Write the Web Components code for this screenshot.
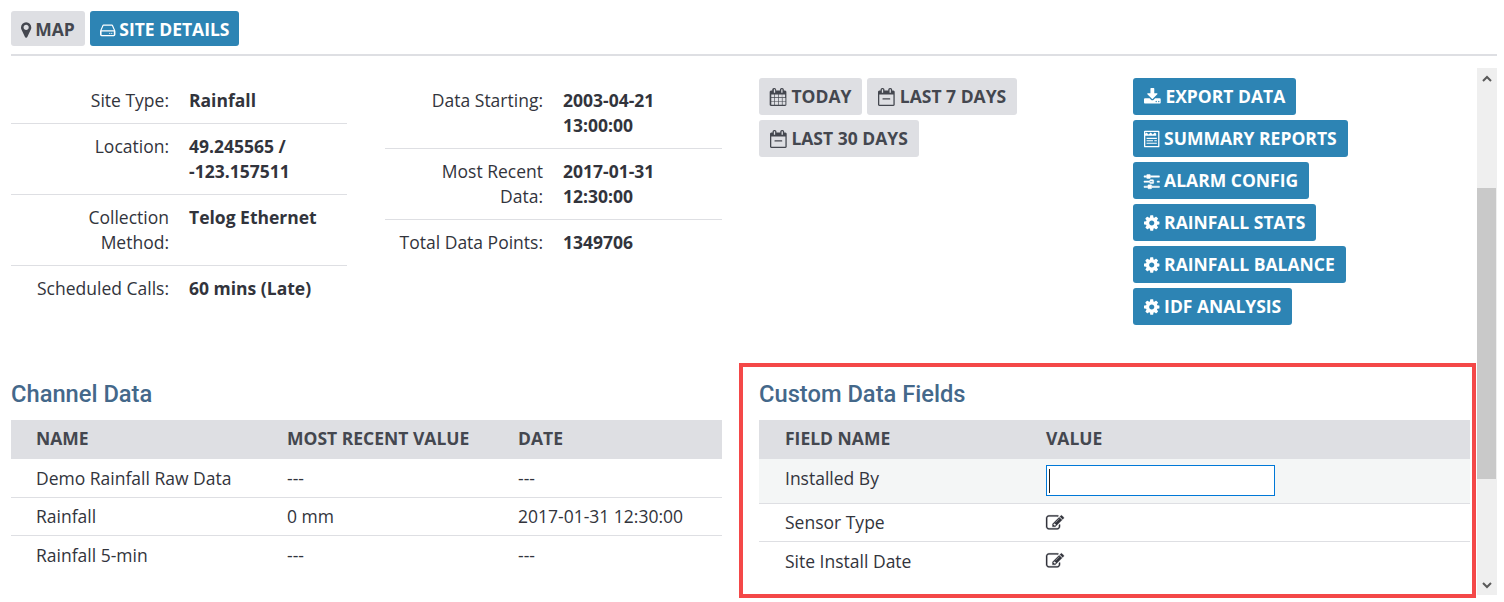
<!DOCTYPE html>
<html>
<head>
<meta charset="utf-8">
<title>Site Details</title>
<style>
  html, body { margin: 0; padding: 0; height: 100%; overflow: hidden; background: white; }
  body { color: #32343c; font-family: "Open Sans", sans-serif; font-size: 17.5px; line-height: 25px; }
</style>
</head>
<body>
<site-page></site-page>

<script>
// x and w crop the 1792 grid to the width each glyph takes up in its line of text
const ICONS = {
  marker: { x: 384, w: 1024, d: "M1152 640q0 106-75 181t-181 75-181-75-75-181 75-181 181-75 181 75 75 181zm256 0q0-212-150-362t-362-150-362 150-150 362q0 109 33 179l365 774q16 33 47.5 52t67.5 19 67.5-19 46.5-52l364-774q33-70 33-179z" },
  hdd: { x: 128, w: 1536, d: "M470 352h852q60 0 88 56l234 536q20 44 20 92v320q0 66-47 113t-113 47H288q-66 0-113-47t-47-113v-320q0-48 20-92l234-536q28-56 88-56zM480 480H1312L1516 928H276zM288 1056H1504V1360Q1504 1392 1472 1392H320Q288 1392 288 1360zM1160 1230a60 60 0 1 1-120 0a60 60 0 1 1 120 0zM1360 1230a60 60 0 1 1-120 0a60 60 0 1 1 120 0z" },
  calendar: { x: 64, w: 1664, d: "M192 1664h288v-288h-288v288zm352 0h320v-288h-320v288zm-352-352h288v-320h-288v320zm352 0h320v-320h-320v320zm-352-384h288v-288h-288v288zm736 736h320v-288h-320v288zm-384-736h320v-288h-320v288zm768 736h288v-288h-288v288zm-384-352h320v-320h-320v320zm-352-864v-288q0-13-9.5-22.5t-22.5-9.5h-64q-13 0-22.5 9.5t-9.5 22.5v288q0 13 9.5 22.5t22.5 9.5h64q13 0 22.5-9.5t9.5-22.5zm736 864h288v-320h-288v320zm-384-384h320v-288h-320v288zm352 0h288v-288h-288v288zm32-480v-288q0-13-9.5-22.5t-22.5-9.5h-64q-13 0-22.5 9.5t-9.5 22.5v288q0 13 9.5 22.5t22.5 9.5h64q13 0 22.5-9.5t9.5-22.5zm384-64v1280q0 52-38 90t-90 38h-1408q-52 0-90-38t-38-90v-1280q0-52 38-90t90-38h128v-96q0-66 47-113t113-47h64q66 0 113 47t47 113v96h384v-96q0-66 47-113t113-47h64q66 0 113 47t47 113v96h128q52 0 90 38t38 90z" },
  calminus: { x: 64, w: 1664, d: "M1280 1056v64q0 14-9 23t-23 9h-704q-14 0-23-9t-9-23v-64q0-14 9-23t23-9h704q14 0 23 9t9 23zm-1088 608h1408v-1024h-1408v1024zm384-1216v-288q0-14-9-23t-23-9h-64q-14 0-23 9t-9 23v288q0 14 9 23t23 9h64q14 0 23-9t9-23zm768 0v-288q0-14-9-23t-23-9h-64q-14 0-23 9t-9 23v288q0 14 9 23t23 9h64q14 0 23-9t9-23zm384-64v1280q0 52-38 90t-90 38h-1408q-52 0-90-38t-38-90v-1280q0-52 38-90t90-38h128v-96q0-66 47-113t113-47h64q66 0 113 47t47 113v96h384v-96q0-66 47-113t113-47h64q66 0 113 47t47 113v96h128q52 0 90 38t38 90z" },
  download: { x: 64, w: 1664, d: "M1344 1344q0-26-19-45t-45-19-45 19-19 45 19 45 45 19 45-19 19-45zm256 0q0-26-19-45t-45-19-45 19-19 45 19 45 45 19 45-19 19-45zm128-224v320q0 40-28 68t-68 28h-1472q-40 0-68-28t-28-68v-320q0-40 28-68t68-28h465l135 136q58 56 136 56t136-56l136-136h464q40 0 68 28t28 68zm-325-569q17 41-14 70l-448 448q-18 19-45 19t-45-19l-448-448q-31-29-14-70 17-39 59-39h256v-448q0-26 19-45t45-19h256q26 0 45 19t19 45v448h256q42 0 59 39z" },
  report: { x: 128, w: 1536, d: "M224 64h1344q96 0 96 96v1472q0 96-96 96H224q-96 0-96-96V160q0-96 96-96zM256 192v1408h1280V192zM384 256l192 192 224-192 192 192 224-192 128 128v192H256V384zM384 768h1024v128H384zM384 1024h640v96H384zM1152 1024h256v96h-256zM384 1280h1024v96H384z" },
  sliders: { x: 128, w: 1536, s: 50, d: "M480 1408v128h-352v-128h352zm352-128q26 0 45 19t19 45v256q0 26-19 45t-45 19h-256q-26 0-45-19t-19-45v-256q0-26 19-45t45-19h256zm160-384v128h-864v-128h864zm-640-512v128h-224v-128h224zm1312 1024v128h-736v-128h736zm-960-1152q26 0 45 19t19 45v256q0 26-19 45t-45 19h-256q-26 0-45-19t-19-45v-256q0-26 19-45t45-19h256zm320 512q26 0 45 19t19 45v256q0 26-19 45t-45 19h-256q-26 0-45-19t-19-45v-256q0-26 19-45t45-19h256zm640 128v128h-224v-128h224zm0-512v128h-864v-128h864z" },
  gear: { x: 128, w: 1536, d: "M1152 896q0-106-75-181t-181-75-181 75-75 181 75 181 181 75 181-75 75-181zm512-109v222q0 12-8 23t-20 13l-185 28q-19 54-39 91 35 50 107 138 10 12 10 25t-9 23q-27 37-99 108t-94 71q-12 0-26-9l-138-108q-44 23-91 38-16 136-29 186-7 28-36 28h-222q-14 0-24.5-8.5t-11.5-21.5l-28-184q-49-16-90-37l-141 107q-10 9-25 9-14 0-25-11-126-114-165-168-7-10-7-23 0-12 8-23 15-21 51-66.5t54-70.5q-27-50-41-99l-183-27q-13-2-21-12.5t-8-23.5v-222q0-12 8-23t19-13l186-28q14-46 39-92-40-57-107-138-10-12-10-24 0-10 9-23 26-36 98.5-107.5t94.5-71.5q13 0 26 10l138 107q44-23 91-38 16-136 29-186 7-28 36-28h222q14 0 24.5 8.5t11.5 21.5l28 184q49 16 90 37l142-107q9-9 24-9 13 0 25 10 129 119 165 170 7 8 7 22 0 12-8 23-15 21-51 66.5t-54 70.5q26 50 41 98l183 28q13 2 21 12.5t8 23.5z" },
  edit: { x: 0, w: 1792, s: 24, d: "M888 1184l116-116-152-152-116 116v56h96v96h56zm440-720q-16-16-33 1l-350 350q-17 17-1 33t33-1l350-350q17-17 1-33zm80 594v190q0 119-84.5 203.5t-203.5 84.5h-832q-119 0-203.5-84.5t-84.5-203.5v-832q0-119 84.5-203.5t203.5-84.5h832q63 0 117 25 15 7 18 23 3 17-9 29l-49 49q-14 14-32 8-23-6-45-6h-832q-66 0-113 47t-47 113v832q0 66 47 113t113 47h832q66 0 113-47t47-113v-126q0-13 9-22l64-64q15-15 35-7t20 29zm-96-738l288 288-672 672h-288v-288zm444 132l-92 92-288-288 92-92q28-28 68-28t68 28l152 152q28 28 28 68t-28 68z" }
};

class FaIcon extends HTMLElement {
  connectedCallback() {
    const icon = ICONS[this.getAttribute("name")];
    const root = this.shadowRoot || this.attachShadow({ mode: "open" });
    root.innerHTML = `
      <style>
        :host { display: inline-flex; vertical-align: middle; }
        svg { display: block; fill: currentColor; fill-rule: evenodd; overflow: visible; }
        path { stroke: currentColor; stroke-width: ${icon.s || 0}; }
      </style>
      <svg width="${(icon.w / 1792) * 18}" height="18" viewBox="${icon.x} 0 ${icon.w} 1792"><path d="${icon.d}"/></svg>`;
  }
}
customElements.define("fa-icon", FaIcon);

const btnTemplate = document.createElement("template");
btnTemplate.innerHTML = `
<style>
  :host {
    align-items: center;
    background-color: #dedfe3;
    border-radius: 3px;
    box-sizing: border-box;
    color: #44474f;
    display: inline-flex;
    font-family: "Open Sans", sans-serif;
    font-size: 17.5px;
    font-weight: 700;
    gap: 4.7px;
    height: 37px;
    line-height: 25px;
    padding: 0 11px;
    white-space: nowrap;
  }
  :host([primary]) { background-color: #2d84b4; color: white; }
  :host([small]) { gap: 4px; height: 35px; padding: 2px 10px 0; }
</style>
<slot></slot>
`;
class SiteButton extends HTMLElement {
  constructor() {
    super();
    this.attachShadow({ mode: "open" }).appendChild(btnTemplate.content.cloneNode(true));
  }
}
customElements.define("site-button", SiteButton);

const infoTemplate = document.createElement("template");
infoTemplate.innerHTML = `
<style>
  :host {
    border-bottom: 1px solid #dedfe3;
    display: grid;
    grid-template-columns: var(--label-w) 1fr;
    column-gap: 20px;
    padding: 10px 0;
  }
  :host(:last-child) { border-bottom: none; }
  .label { text-align: right; }
  .value { font-weight: 700; }
</style>
<div class="label"><slot name="label"></slot></div>
<div class="value"><slot></slot></div>
`;
class InfoRow extends HTMLElement {
  constructor() {
    super();
    this.attachShadow({ mode: "open" }).appendChild(infoTemplate.content.cloneNode(true));
  }
}
customElements.define("info-row", InfoRow);

const tableTemplate = document.createElement("template");
tableTemplate.innerHTML = `
<style>
  :host { display: block; }
  h2 {
    color: #44688a;
    font-family: Roboto, sans-serif;
    font-size: 23.7px;
    font-weight: 500;
    line-height: 30px;
    margin: 0 0 11px;
  }
</style>
<h2></h2>
<slot></slot>
`;
class DataSection extends HTMLElement {
  constructor() {
    super();
    this.attachShadow({ mode: "open" }).appendChild(tableTemplate.content.cloneNode(true));
  }
  connectedCallback() {
    this.shadowRoot.querySelector("h2").textContent = this.getAttribute("heading");
  }
}
customElements.define("data-section", DataSection);

const rowTemplate = document.createElement("template");
rowTemplate.innerHTML = `
<style>
  :host {
    align-items: center;
    border-bottom: 1px solid #dedfe3;
    box-sizing: border-box;
    display: grid;
    grid-template-columns: var(--cols);
    height: 38px;
    padding-left: var(--row-pad, 25px);
  }
  :host(:last-child) { border-bottom: none; }
  :host([tall]) { height: 39px; }
  :host([head]) {
    background: #dedfe3;
    border-bottom: none;
    color: #44474f;
    font-weight: 700;
    height: 39px;
    padding-bottom: 2px;
  }
  :host([active]) { align-items: start; background: #f4f6f6; height: 45px; padding-top: 6px; }
</style>
<slot></slot>
`;
class DataRow extends HTMLElement {
  constructor() {
    super();
    this.attachShadow({ mode: "open" }).appendChild(rowTemplate.content.cloneNode(true));
  }
}
customElements.define("data-row", DataRow);

const scrollTemplate = document.createElement("template");
scrollTemplate.innerHTML = `
<style>
  :host {
    background: #efefef;
    box-sizing: border-box;
    display: flex;
    flex-direction: column;
    height: 527px;
    padding-right: 1px;
    width: 20px;
  }
  .arrow { display: flex; flex: none; height: 20px; align-items: center; justify-content: center; }
  .gap-top { flex: none; height: 100px; }
  .thumb { background: #c9c9c9; flex: none; height: 291px; }
  .rest { flex: 1; }
  svg { display: block; }
</style>
<div class="arrow"><svg width="10" height="7" viewBox="0 0 10 7"><path d="M1 6l4-4 4 4" fill="none" stroke="#5a5a5a" stroke-width="2"/></svg></div>
<div class="gap-top"></div>
<div class="thumb"></div>
<div class="rest"></div>
<div class="arrow"><svg width="10" height="7" viewBox="0 0 10 7"><path d="M1 1l4 4 4-4" fill="none" stroke="#5a5a5a" stroke-width="2"/></svg></div>
`;
class FakeScrollbar extends HTMLElement {
  constructor() {
    super();
    this.attachShadow({ mode: "open" }).appendChild(scrollTemplate.content.cloneNode(true));
  }
}
customElements.define("fake-scrollbar", FakeScrollbar);

const pageTemplate = document.createElement("template");
pageTemplate.innerHTML = `
<style>
  :host {
    display: block;
    height: 602px;
    padding: 11px 7px 0 11px;
    box-sizing: border-box;
    position: relative;
  }
  .tabs {
    border-bottom: 2px solid #dedfe3;
    display: flex;
    gap: 5px;
    height: 43px;
    margin-bottom: 12px;
  }
  .body { display: flex; }
  .main { flex: 1; min-width: 0; }
  .top { display: grid; grid-template-columns: 374px 374px 374px 1fr; height: 290px; padding-top: 10px; }
  .top > div { min-width: 0; }
  .col1 { --label-w: 158px; padding-right: 38px; }
  .col2 { --label-w: 158px; padding-right: 37px; }
  .ranges { display: flex; flex-wrap: wrap; gap: 5px; align-content: flex-start; width: 300px; }
  .actions { display: flex; flex-direction: column; align-items: flex-start; gap: 5px; }
  .tables { display: grid; grid-template-columns: 711px 711px; column-gap: 37px; margin-top: 11px; }
  .channel { --cols: 251px 231px 1fr; }
  .custom { --cols: 261px 1fr; --row-pad: 26px; }
  .name { display: block; padding-top: 1px; }
  .field { display: block; position: relative; }
  input {
    background: white;
    border: 1px solid #0078d7;
    box-sizing: border-box;
    display: block;
    height: 31px;
    outline: none;
    padding: 0 2px;
    width: 229px;
  }
  .caret { background: #222; height: 24px; left: 3px; position: absolute; top: 4px; width: 1px; }
  .callout {
    border: 4px solid #f44848;
    box-sizing: border-box;
    height: 235px;
    left: 739px;
    position: absolute;
    top: 363px;
    width: 737px;
    pointer-events: none;
  }
</style>
<div class="tabs">
  <site-button small><fa-icon name="marker"></fa-icon>MAP</site-button>
  <site-button small primary><fa-icon name="hdd"></fa-icon>SITE DETAILS</site-button>
</div>
<div class="body">
  <div class="main">
    <div class="top">
      <div class="col1">
        <info-row><span slot="label">Site Type:</span>Rainfall</info-row>
        <info-row><span slot="label">Location:</span>49.245565 /<br>-123.157511</info-row>
        <info-row><span slot="label">Collection<br>Method:</span>Telog Ethernet</info-row>
        <info-row><span slot="label">Scheduled Calls:</span>60 mins (Late)</info-row>
      </div>
      <div class="col2">
        <info-row><span slot="label">Data Starting:</span>2003-04-21<br>13:00:00</info-row>
        <info-row><span slot="label">Most Recent<br>Data:</span>2017-01-31<br>12:30:00</info-row>
        <info-row><span slot="label">Total Data Points:</span>1349706</info-row>
      </div>
      <div class="ranges">
        <site-button><fa-icon name="calendar"></fa-icon>TODAY</site-button>
        <site-button><fa-icon name="calminus"></fa-icon>LAST 7 DAYS</site-button>
        <site-button><fa-icon name="calminus"></fa-icon>LAST 30 DAYS</site-button>
      </div>
      <div class="actions">
        <site-button primary><fa-icon name="download"></fa-icon>EXPORT DATA</site-button>
        <site-button primary><fa-icon name="report"></fa-icon>SUMMARY REPORTS</site-button>
        <site-button primary><fa-icon name="sliders"></fa-icon>ALARM CONFIG</site-button>
        <site-button primary><fa-icon name="gear"></fa-icon>RAINFALL STATS</site-button>
        <site-button primary><fa-icon name="gear"></fa-icon>RAINFALL BALANCE</site-button>
        <site-button primary><fa-icon name="gear"></fa-icon>IDF ANALYSIS</site-button>
      </div>
    </div>
    <div class="tables">
      <data-section class="channel" heading="Channel Data">
        <data-row head><span>NAME</span><span>MOST RECENT VALUE</span><span>DATE</span></data-row>
        <data-row tall><span>Demo Rainfall Raw Data</span><span>---</span><span>---</span></data-row>
        <data-row><span>Rainfall</span><span>0 mm</span><span>2017-01-31 12:30:00</span></data-row>
        <data-row><span>Rainfall 5-min</span><span>---</span><span>---</span></data-row>
      </data-section>
      <data-section class="custom" heading="Custom Data Fields">
        <data-row head><span>FIELD NAME</span><span>VALUE</span></data-row>
        <data-row active><span class="name">Installed By</span><span class="field"><input type="text"><span class="caret"></span></span></data-row>
        <data-row><span>Sensor Type</span><fa-icon name="edit"></fa-icon></data-row>
        <data-row><span>Site Install Date</span><fa-icon name="edit"></fa-icon></data-row>
      </data-section>
    </div>
  </div>
  <fake-scrollbar></fake-scrollbar>
</div>
<div class="callout"></div>
`;
class SitePage extends HTMLElement {
  constructor() {
    super();
    this.attachShadow({ mode: "open" }).appendChild(pageTemplate.content.cloneNode(true));
  }
}
customElements.define("site-page", SitePage);
</script>
</body>
</html>
